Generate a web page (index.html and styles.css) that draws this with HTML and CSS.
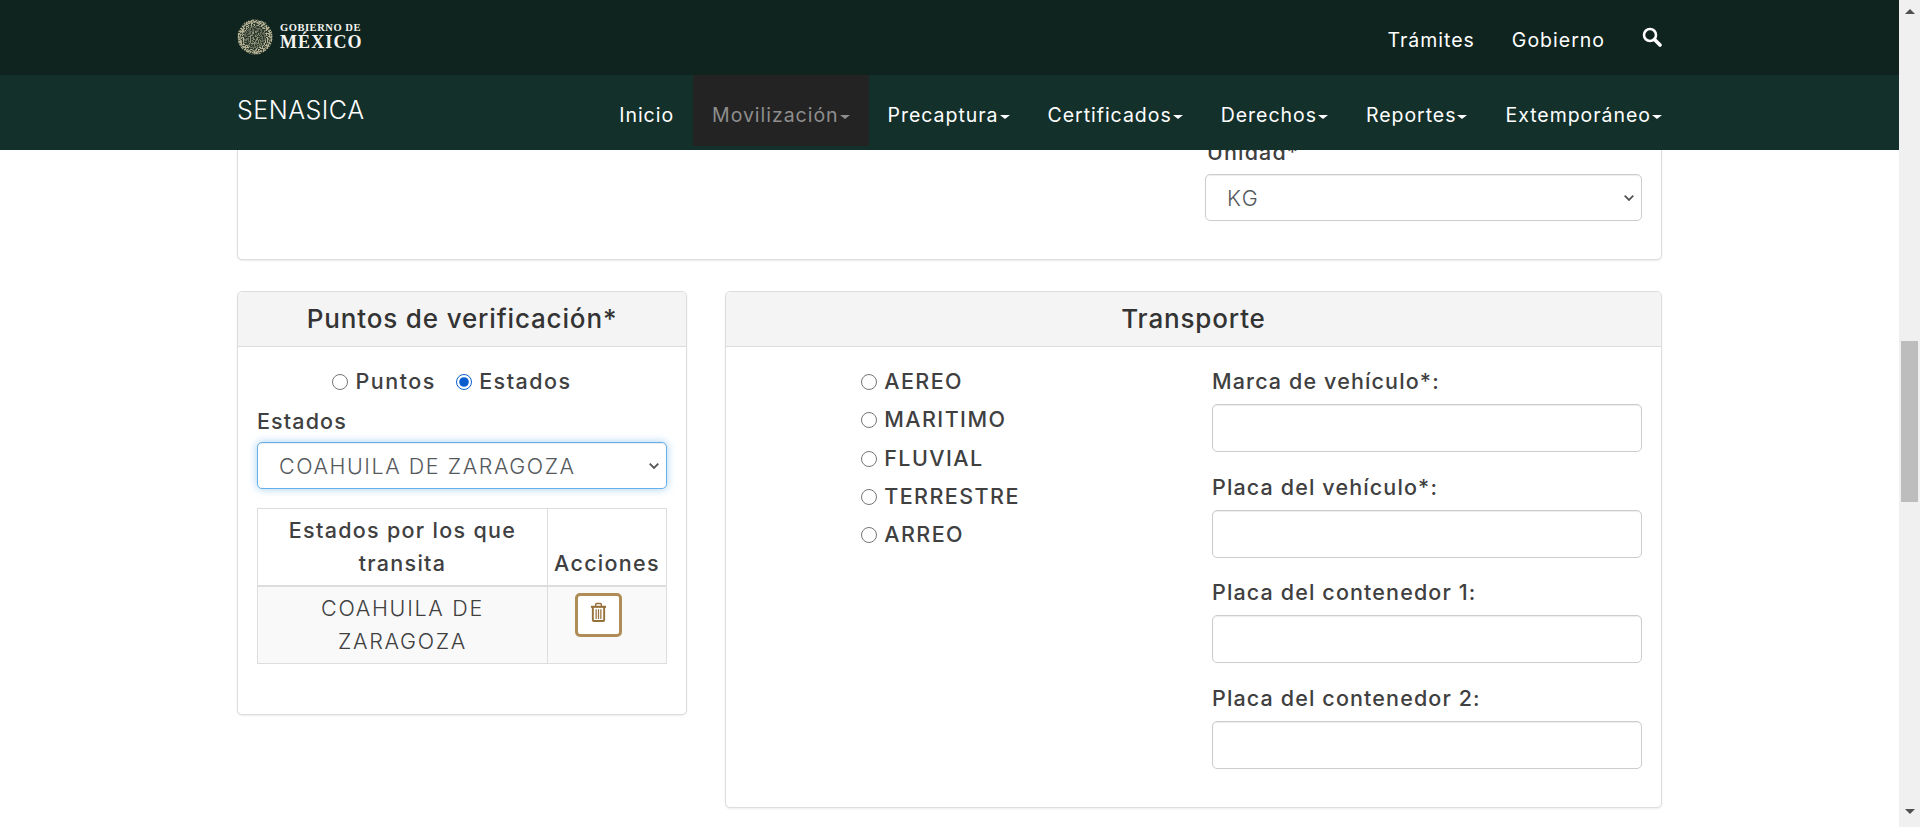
FILE: index.html
```html
<!DOCTYPE html>
<html lang="es">
<head>
  <meta charset="UTF-8">
  <meta name="viewport" content="width=device-width, initial-scale=1.0">
  <title>SENASICA</title>
  <link rel="stylesheet" href="styles.css">
</head>
<body>
  <div class="page">
    <header>
      <div class="top-bar">
        <div class="wrap top-inner">
          <a class="logo" href="#">
            <svg class="seal" viewBox="0 0 36 36" width="36" height="36">
              <defs>
                <filter id="grain" x="0" y="0" width="100%" height="100%">
                  <feTurbulence type="fractalNoise" baseFrequency="0.75" numOctaves="2" seed="4" result="noise"/>
                  <feColorMatrix in="noise" type="matrix" values="0 0 0 0 0  0 0 0 0 0  0 0 0 0 0  0 0 0 9 -4" result="spots"/>
                  <feComposite in="SourceGraphic" in2="spots" operator="in"/>
                </filter>
              </defs>
              <circle cx="18" cy="18" r="17.5" fill="#2d3a30"/>
              <circle cx="18" cy="18" r="17.5" fill="#b5b394" filter="url(#grain)"/>
              <circle cx="18" cy="18" r="15.5" fill="none" stroke="#b5b394" stroke-width="2.5" stroke-dasharray="1.5 1.3" opacity=".7"/>
              <circle cx="18" cy="18" r="11" fill="#2b382e" opacity=".55"/>
              <path d="M11 20c2-5 5-8 8-8 1 2 4 2 6 4-2 1-3 2-3 4 2 1 3 3 3 5-4 2-9 2-13 0 1-2 1-3-1-5z" fill="#a3a486" opacity=".7" filter="url(#grain)"/>
            </svg>
            <span class="logo-text">
              <span class="logo-small">GOBIERNO DE</span>
              <span class="logo-big">MÉXICO</span>
            </span>
          </a>
          <nav class="top-links">
            <a href="#">Trámites</a>
            <a href="#">Gobierno</a>
            <a href="#" class="search-link" aria-label="Buscar">
              <svg viewBox="0 0 20 20" width="20" height="20">
                <circle cx="8" cy="8" r="6" fill="none" stroke="#fff" stroke-width="2.6"/>
                <path d="M12.5 12.5l5.5 5.5" stroke="#fff" stroke-width="3.6" stroke-linecap="round"/>
              </svg>
            </a>
          </nav>
        </div>
      </div>
      <div class="nav-bar">
        <div class="wrap nav-inner">
          <a class="brand" href="#">SENASICA</a>
          <ul class="menu">
            <li><a href="#">Inicio</a></li>
            <li class="open"><a href="#">Movilización<span class="caret"></span></a></li>
            <li><a href="#">Precaptura<span class="caret"></span></a></li>
            <li><a href="#">Certificados<span class="caret"></span></a></li>
            <li><a href="#">Derechos<span class="caret"></span></a></li>
            <li><a href="#">Reportes<span class="caret"></span></a></li>
            <li><a href="#">Extemporáneo<span class="caret"></span></a></li>
          </ul>
        </div>
      </div>
    </header>

    <main>
      <div class="wrap">
        <section class="card card-top">
          <div class="unit-field">
            <label for="unidad">Unidad*</label>
            <select id="unidad" class="control">
              <option>KG</option>
            </select>
          </div>
        </section>

        <div class="row">
          <section class="card card-points">
            <h2 class="card-title">Puntos de verificación*</h2>
            <div class="card-body">
              <div class="radio-inline">
                <label><input type="radio" name="tipo"> Puntos</label>
                <label><input type="radio" name="tipo" checked> Estados</label>
              </div>
              <label class="field-label" for="estado">Estados</label>
              <select id="estado" class="control focused">
                <option>COAHUILA DE ZARAGOZA</option>
              </select>
              <table>
                <thead>
                  <tr>
                    <th class="col-state">Estados por los que transita</th>
                    <th>Acciones</th>
                  </tr>
                </thead>
                <tbody>
                  <tr>
                    <td>COAHUILA DE ZARAGOZA</td>
                    <td class="col-action">
                      <button type="button" class="btn-delete" aria-label="Eliminar">
                        <svg viewBox="0 0 18 21" width="17" height="20">
                          <path d="M1 5h16" stroke="#96703a" stroke-width="2.2"/>
                          <path d="M6 4.5V2.5q0-1 1-1h4q1 0 1 1v2" fill="none" stroke="#96703a" stroke-width="1.5"/>
                          <path d="M3 5v14q0 1 1 1h10q1 0 1-1V5" fill="none" stroke="#96703a" stroke-width="2"/>
                          <path d="M6.5 7.5V18M9 7.5V18M11.5 7.5V18" stroke="#96703a" stroke-width="1.3"/>
                        </svg>
                      </button>
                    </td>
                  </tr>
                </tbody>
              </table>
            </div>
          </section>

          <section class="card card-transport">
            <h2 class="card-title">Transporte</h2>
            <div class="card-body transport-body">
              <div class="radio-list">
                <label><input type="radio" name="transporte"> AEREO</label>
                <label><input type="radio" name="transporte"> MARITIMO</label>
                <label><input type="radio" name="transporte"> FLUVIAL</label>
                <label><input type="radio" name="transporte"> TERRESTRE</label>
                <label><input type="radio" name="transporte"> ARREO</label>
              </div>
              <div class="vehicle-fields">
                <div class="field">
                  <label class="field-label" for="marca">Marca de vehículo*:</label>
                  <input id="marca" type="text" class="control">
                </div>
                <div class="field">
                  <label class="field-label" for="placa">Placa del vehículo*:</label>
                  <input id="placa" type="text" class="control">
                </div>
                <div class="field">
                  <label class="field-label" for="cont1">Placa del contenedor 1:</label>
                  <input id="cont1" type="text" class="control">
                </div>
                <div class="field">
                  <label class="field-label" for="cont2">Placa del contenedor 2:</label>
                  <input id="cont2" type="text" class="control">
                </div>
              </div>
            </div>
          </section>
        </div>
      </div>
    </main>
  </div>

  <aside class="scrollbar">
    <span class="arrow-up"></span>
    <div class="track"><div class="thumb"></div></div>
    <span class="arrow-down"></span>
  </aside>
</body>
</html>
```

FILE: styles.css
```css
* {
  box-sizing: border-box;
}
html, body {
  height: 100%;
}
body {
  display: flex;
  margin: 0;
  overflow: hidden;
  font-family: Inter, "Open Sans", sans-serif;
  font-size: 21.5px;
  color: #404041;
  background: #fff;
}
a {
  color: inherit;
  text-decoration: none;
}
.page {
  flex: 1;
  min-width: 0;
  display: flex;
  flex-direction: column;
  height: 100%;
}
.wrap {
  width: 1425px;
  margin: 0 auto;
}

/* header */
.top-bar {
  height: 75px;
  background: #0f241e;
  color: #fff;
}
.top-inner {
  height: 100%;
  display: flex;
  align-items: center;
  justify-content: space-between;
}
.logo {
  display: flex;
  align-items: center;
  gap: 7px;
  margin-top: -2px;
}
.seal {
  display: block;
}
.logo-text {
  display: flex;
  flex-direction: column;
  font-family: "Liberation Serif", serif;
  font-weight: bold;
  color: #f4f4f0;
}
.logo-small {
  font-size: 10.5px;
  line-height: 12px;
  letter-spacing: .55px;
}
.logo-big {
  font-size: 18px;
  line-height: 17px;
  letter-spacing: 1.1px;
}
.top-links {
  display: flex;
  align-items: center;
  gap: 37px;
  padding-top: 4px;
  font-size: 19.5px;
  letter-spacing: 1px;
}
.search-link {
  display: block;
  height: 20px;
  margin-top: -5px;
}
.search-link svg {
  display: block;
}
.nav-bar {
  height: 75px;
  background: #14302b;
  color: #fff;
}
.nav-inner {
  height: 100%;
  display: flex;
  justify-content: space-between;
}
.brand {
  font-size: 25px;
  font-weight: 350;
  line-height: 71px;
  letter-spacing: .5px;
}
.menu {
  display: flex;
  list-style: none;
  margin: 0 -19px 0 0;
  padding: 0;
  height: 71px;
  font-size: 19.5px;
  letter-spacing: .97px;
}
.menu a {
  display: block;
  padding: 0 19px;
  line-height: 80px;
  height: 71px;
}
.menu .open a {
  background: #232323;
  color: #8e8e8e;
}
.caret {
  display: inline-block;
  margin-left: 1px;
  vertical-align: middle;
  border-top: 4px solid currentColor;
  border-left: 5px solid transparent;
  border-right: 5px solid transparent;
}

/* content */
main {
  flex: 1;
  overflow: hidden;
}
.card {
  border: 1px solid #ddd;
  border-radius: 5px;
  box-shadow: 0 1px 2px rgba(0,0,0,.08);
  background: #fff;
}
.card-top {
  height: 131px;
  margin-top: -21px;
  padding: 10px 19px 0;
  display: flex;
  justify-content: flex-end;
}
.unit-field {
  width: 437px;
}
.unit-field label {
  display: block;
  padding-left: 2px;
  font-weight: 550;
  line-height: 24px;
  margin-bottom: 10px;
  letter-spacing: 1.13px;
}
.unit-field .control {
  height: 47px;
}
.row {
  display: flex;
  align-items: flex-start;
  gap: 38px;
  margin-top: 31px;
}
.card-points {
  width: 450px;
  height: 424px;
}
.card-transport {
  flex: 1;
  height: 517px;
}
.card-title {
  margin: 0;
  height: 55px;
  line-height: 54px;
  text-align: center;
  font-size: 26px;
  font-weight: 550;
  color: #333;
  letter-spacing: .85px;
  background: #f4f4f4;
  border-bottom: 1px solid #ddd;
  border-radius: 4px 4px 0 0;
}
.card-body {
  padding: 22px 19px 0;
}
.control {
  display: block;
  width: 100%;
  height: 48px;
  padding: 0 16px;
  font-family: inherit;
  font-size: 21.5px;
  font-weight: 300;
  letter-spacing: 1.55px;
  color: #55595c;
  background-color: #fff;
  border: 1px solid #ccc;
  border-radius: 5px;
  box-shadow: inset 0 1px 1px rgba(0,0,0,.075);
}
select.control {
  appearance: none;
  padding-left: 21px;
  background-image: url("data:image/svg+xml,%3Csvg xmlns='http://www.w3.org/2000/svg' width='10' height='6'%3E%3Cpath d='M.7.7 5 5 9.300.7' fill='none' stroke='%23555' stroke-width='1.800'/%3E%3C/svg%3E");
  background-repeat: no-repeat;
  background-position: right 7px center;
}
.control.focused {
  height: 47px;
  border-color: #66afe9;
  box-shadow: inset 0 1px 1px rgba(0,0,0,.075), 0 0 8px rgba(102,175,233,.6);
}
input[type="radio"] {
  width: 16px;
  height: 16px;
  margin: 0;
  accent-color: #0a5fcf;
  vertical-align: -1px;
}
.radio-inline {
  display: flex;
  justify-content: center;
  gap: 20px;
  height: 24px;
  padding-right: 20px;
  line-height: 24px;
  font-weight: 550;
  letter-spacing: 1.5px;
}
.field-label {
  display: block;
  font-weight: 550;
  line-height: 24px;
  letter-spacing: 1.13px;
}
.card-points .field-label {
  margin-top: 16px;
  margin-bottom: 9px;
}
table {
  width: 100%;
  margin-top: 19px;
  border-collapse: collapse;
  table-layout: fixed;
}
th, td {
  border: 1px solid #ddd;
  text-align: center;
  line-height: 33px;
}
th {
  font-weight: 550;
  vertical-align: bottom;
  border-bottom-width: 2px;
  padding: 5px 2px 5px;
  letter-spacing: 1.3px;
}
.col-state {
  width: 290px;
}
td {
  background: #f9f9f9;
  font-weight: 300;
  padding: 5px 20px;
  letter-spacing: 1.7px;
  color: #404041;
}
td.col-action {
  vertical-align: top;
  padding: 6px 0 0;
}
.btn-delete {
  display: block;
  width: 47px;
  height: 44px;
  margin: 0 0 0 27px;
  padding: 0 0 6px;
  background: #fff;
  border: 3px solid #b08d57;
  border-radius: 5px;
}
.btn-delete svg {
  display: block;
  margin: 0 auto;
}
.transport-body {
  display: flex;
  justify-content: space-between;
  padding: 22px 19px 0 135px;
}
.radio-list {
  display: flex;
  flex-direction: column;
  gap: 14px;
  font-weight: 550;
  letter-spacing: 1.45px;
}
.radio-list label {
  line-height: 24.3px;
}
.vehicle-fields {
  width: 430px;
  display: flex;
  flex-direction: column;
  gap: 22.6px;
}
.vehicle-fields .field-label {
  margin-bottom: 11px;
}

/* window scrollbar */
.scrollbar {
  flex: 0 0 21px;
  height: 100%;
  display: flex;
  flex-direction: column;
  align-items: center;
  background: #f0f0f0;
}
.track {
  flex: 1;
  width: 17px;
  padding-top: 323px;
}
.thumb {
  height: 161px;
  background: #bdbdbd;
}
.arrow-up, .arrow-down {
  display: block;
  width: 0;
  border-left: 5px solid transparent;
  border-right: 5px solid transparent;
}
.arrow-up {
  margin: 9px 0 4px;
  border-bottom: 5px solid #505050;
}
.arrow-down {
  margin: 4px 0 13px;
  border-top: 5px solid #505050;
}
```
